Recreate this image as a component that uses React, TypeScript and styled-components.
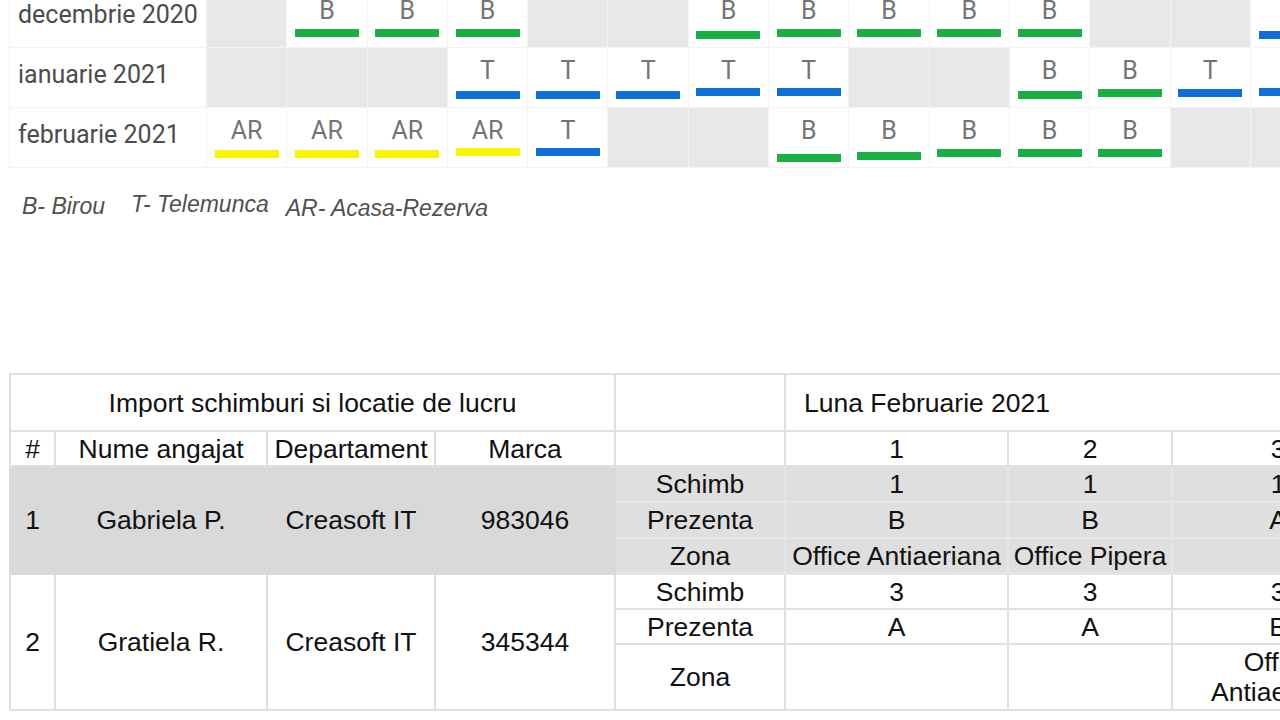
import styled, { createGlobalStyle } from 'styled-components';

const GlobalStyle = createGlobalStyle`
  html, body {
    margin: 0;
    padding: 0;
    background: #fff;
    overflow: hidden;
  }
`;

type Kind = 'B' | 'T' | 'AR';

type Day = { kind: Kind | null; shift?: number };

type Month = { label: string; days: Day[] };

const barColors: Record<Kind, string> = {
  B: '#18b043',
  T: '#0f6fd6',
  AR: '#f9f500',
};

const d = (kind: Kind | null, shift = 0): Day => ({ kind, shift });

const months: Month[] = [
  {
    label: 'decembrie 2020',
    days: [
      d(null), d('B', -1), d('B', -1), d('B', -1), d(null), d(null), d('B', 1),
      d('B', -1), d('B', -1), d('B', -1), d('B', -1), d(null), d(null), d('T', 1),
    ],
  },
  {
    label: 'ianuarie 2021',
    days: [
      d(null), d(null), d(null), d('T', 1), d('T', 1), d('T', 1), d('T', -2),
      d('T', -2), d(null), d(null), d('B', 1), d('B', -1), d('T', -1), d('T', -2),
    ],
  },
  {
    label: 'februarie 2021',
    days: [
      d('AR'), d('AR'), d('AR'), d('AR', -2), d('T', -2), d(null), d(null),
      d('B', 4), d('B', 2), d('B', -1), d('B', -1), d('B', -1), d(null), d(null),
    ],
  },
];

type Employee = {
  nr: number;
  name: string;
  dept: string;
  marca: string;
  shaded: boolean;
  heights: number[];
  schimb: string[];
  prezenta: string[];
  zona: string[];
};

const employees: Employee[] = [
  {
    nr: 1,
    name: 'Gabriela P.',
    dept: 'Creasoft IT',
    marca: '983046',
    shaded: true,
    heights: [34, 34, 34],
    schimb: ['1', '1', '1'],
    prezenta: ['B', 'B', 'A'],
    zona: ['Office Antiaeriana', 'Office Pipera', ''],
  },
  {
    nr: 2,
    name: 'Gratiela R.',
    dept: 'Creasoft IT',
    marca: '345344',
    shaded: false,
    heights: [33, 33, 64],
    schimb: ['3', '3', '3'],
    prezenta: ['A', 'A', 'B'],
    zona: ['', '', 'Office Antiaeriana'],
  },
];

const columns = [45, 212, 168, 180, 170, 223, 164, 212];

const Page = styled.div`
  display: flex;
  flex-direction: column;
  align-items: flex-start;
`;

/* calendar */

const Calendar = styled.div`
  display: grid;
  grid-template-columns: 196px repeat(14, 79.3px);
  grid-auto-rows: 59px;
  gap: 1px;
  padding: 1px;
  margin: -13px 0 0 9px;
  background: #f3f3f3;
`;

const MonthLabel = styled.div`
  display: flex;
  align-items: center;
  padding: 0 0 6px 8px;
  background: #fff;
  font-family: Roboto, 'Noto Sans', sans-serif;
  font-size: 25px;
  color: #4c4c4c;
`;

const DayCell = styled.div<{ $off: boolean }>`
  display: flex;
  flex-direction: column;
  align-items: center;
  padding-top: 9px;
  box-sizing: border-box;
  background: ${(p) => (p.$off ? '#e8e8e8' : '#fff')};
`;

const Letter = styled.span`
  height: 28px;
  font-family: Roboto, 'Noto Sans', sans-serif;
  font-size: 25px;
  line-height: 28px;
  color: #747474;
`;

const Bar = styled.div<{ $color: string; $shift: number }>`
  width: 64px;
  height: 8px;
  margin-top: ${(p) => 5 + p.$shift}px;
  background: ${(p) => p.$color};
`;

const Legend = styled.div`
  display: flex;
  align-items: flex-start;
  margin: 23px 0 0 22px;
  font-family: 'Liberation Sans', Arial, sans-serif;
  font-size: 23px;
  font-style: italic;
  line-height: 26px;
  color: #505050;
`;

const LegendItem = styled.span<{ $ml: number; $dy: number }>`
  margin-left: ${(p) => p.$ml}px;
  margin-top: ${(p) => p.$dy}px;
`;

/* import table */

const Sheet = styled.table`
  margin: 152px 0 0 9px;
  border-collapse: collapse;
  table-layout: fixed;
  width: ${columns.reduce((a, b) => a + b, 0)}px;
  font-family: 'Liberation Sans', Arial, sans-serif;
  font-size: 26.5px;
  line-height: 30px;
  color: #111;
`;

const Col = styled.col<{ $w: number }>`
  width: ${(p) => p.$w}px;
`;

const Head = styled.td<{ $h: number; $left?: boolean }>`
  height: ${(p) => p.$h}px;
  padding: ${(p) => (p.$left ? '0 0 0 18px' : '0 4px')};
  border: 2px solid #e0e0e0;
  background: #fff;
  text-align: ${(p) => (p.$left ? 'left' : 'center')};
  vertical-align: middle;
  white-space: nowrap;
  overflow: hidden;
`;

const KeyCell = styled.td<{ $shaded: boolean }>`
  padding: 0 4px;
  border: 2px solid ${(p) => (p.$shaded ? '#d9d9d9' : '#e0e0e0')};
  background: ${(p) => (p.$shaded ? '#d9d9d9' : '#fff')};
  text-align: center;
  vertical-align: middle;
`;

const ValueCell = styled.td<{ $shaded: boolean; $h: number }>`
  height: ${(p) => p.$h}px;
  padding: 0 4px;
  border: 2px solid ${(p) => (p.$shaded ? '#e6e6e6' : '#e0e0e0')};
  background: ${(p) => (p.$shaded ? '#dfdfdf' : '#fff')};
  text-align: center;
  vertical-align: middle;
`;

const subRows: { label: string; key: 'schimb' | 'prezenta' | 'zona' }[] = [
  { label: 'Schimb', key: 'schimb' },
  { label: 'Prezenta', key: 'prezenta' },
  { label: 'Zona', key: 'zona' },
];

const EmployeeRows = ({ e }: { e: Employee }) => (
  <>
    {subRows.map((s, i) => (
      <tr key={s.key}>
        {i === 0 && (
          <>
            <KeyCell $shaded={e.shaded} rowSpan={3}>{e.nr}</KeyCell>
            <KeyCell $shaded={e.shaded} rowSpan={3}>{e.name}</KeyCell>
            <KeyCell $shaded={e.shaded} rowSpan={3}>{e.dept}</KeyCell>
            <KeyCell $shaded={e.shaded} rowSpan={3}>{e.marca}</KeyCell>
          </>
        )}
        <ValueCell $shaded={e.shaded} $h={e.heights[i]}>{s.label}</ValueCell>
        {e[s.key].map((v, j) => (
          <ValueCell key={j} $shaded={e.shaded} $h={e.heights[i]}>
            {v}
          </ValueCell>
        ))}
      </tr>
    ))}
  </>
);

export default function App() {
  return (
    <Page>
      <GlobalStyle />
      <Calendar>
        {months.map((m) => (
          <>
            <MonthLabel key={m.label}>{m.label}</MonthLabel>
            {m.days.map((day, i) => (
              <DayCell key={m.label + i} $off={!day.kind}>
                {day.kind && (
                  <>
                    <Letter>{day.kind}</Letter>
                    <Bar $color={barColors[day.kind]} $shift={day.shift ?? 0} />
                  </>
                )}
              </DayCell>
            ))}
          </>
        ))}
      </Calendar>

      <Legend>
        <LegendItem $ml={0} $dy={2}>B- Birou</LegendItem>
        <LegendItem $ml={26} $dy={0}>T- Telemunca</LegendItem>
        <LegendItem $ml={17} $dy={4}>AR- Acasa-Rezerva</LegendItem>
      </Legend>

      <Sheet>
        <colgroup>
          {columns.map((w, i) => (
            <Col key={i} $w={w} />
          ))}
        </colgroup>
        <tbody>
          <tr>
            <Head $h={55} colSpan={4}>Import schimburi si locatie de lucru</Head>
            <Head $h={55} />
            <Head $h={55} colSpan={3} $left>Luna Februarie 2021</Head>
          </tr>
          <tr>
            <Head $h={33}>#</Head>
            <Head $h={33}>Nume angajat</Head>
            <Head $h={33}>Departament</Head>
            <Head $h={33}>Marca</Head>
            <Head $h={33} />
            <Head $h={33}>1</Head>
            <Head $h={33}>2</Head>
            <Head $h={33}>3</Head>
          </tr>
          {employees.map((e) => (
            <EmployeeRows key={e.nr} e={e} />
          ))}
        </tbody>
      </Sheet>
    </Page>
  );
}
